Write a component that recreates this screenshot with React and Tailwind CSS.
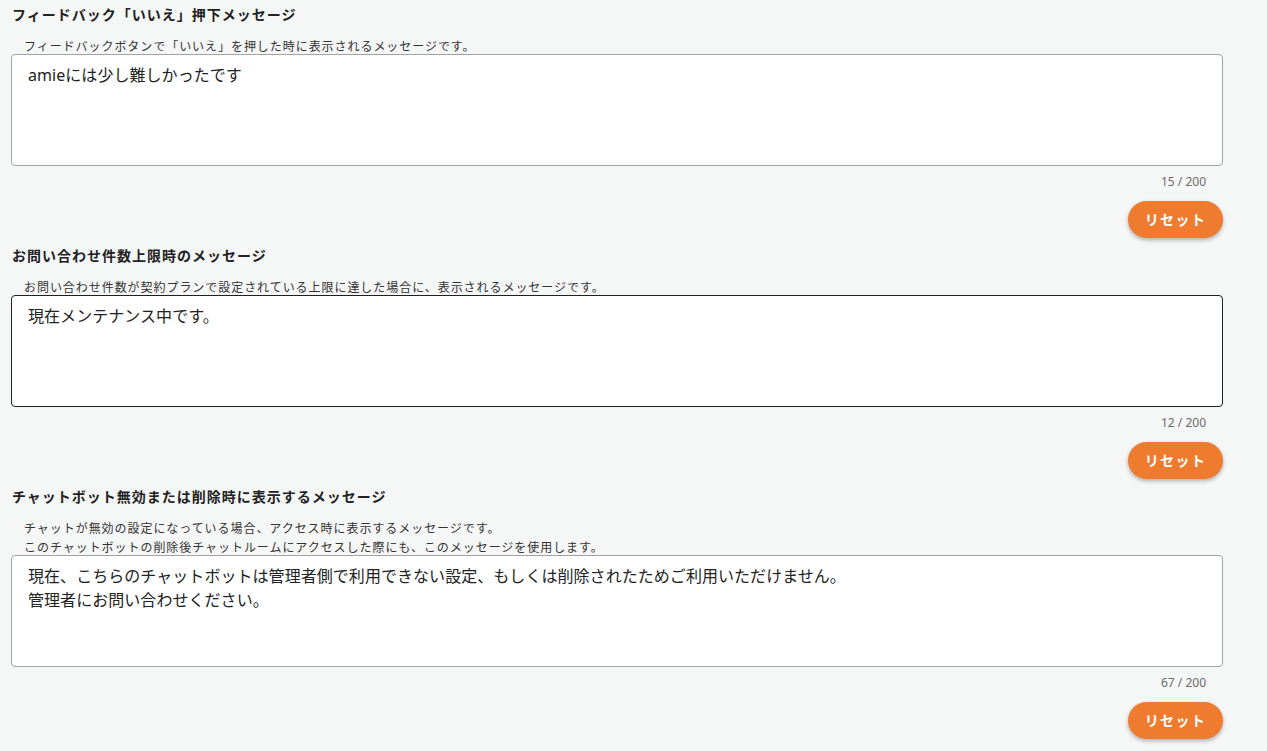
import React from 'react';

const SECTIONS = [
  {
    title: 'フィードバック「いいえ」押下メッセージ',
    desc: ['フィードバックボタンで「いいえ」を押した時に表示されるメッセージです。'],
    value: 'amieには少し難しかったです',
    count: 15,
  },
  {
    title: 'お問い合わせ件数上限時のメッセージ',
    desc: ['お問い合わせ件数が契約プランで設定されている上限に達した場合に、表示されるメッセージです。'],
    value: '現在メンテナンス中です。',
    count: 12,
    focused: true,
  },
  {
    title: 'チャットボット無効または削除時に表示するメッセージ',
    desc: [
      'チャットが無効の設定になっている場合、アクセス時に表示するメッセージです。',
      'このチャットボットの削除後チャットルームにアクセスした際にも、このメッセージを使用します。',
    ],
    value: '現在、こちらのチャットボットは管理者側で利用できない設定、もしくは削除されたためご利用いただけません。\n管理者にお問い合わせください。',
    count: 67,
  },
];

const Section = ({ title, desc, value, count, focused }) => (
  <section className="flex flex-col">
    <h2 className="pl-[1px] text-[14px] leading-[20px] font-bold tracking-[1px] text-[#222]">{title}</h2>
    <div className="mt-[12px] -mb-[2px] pl-[13px] text-[12px] leading-[19px] tracking-[0.95px] text-[#333]">
      {desc.map((d) => (
        <p key={d}>{d}</p>
      ))}
    </div>
    <textarea
      readOnly
      defaultValue={value}
      className={`block w-[1212px] h-[112px] resize-none rounded-[4px] bg-white px-4 py-2 text-[16px] leading-[24px] tracking-[0.05px] text-[#222] outline-none border ${
        focused ? 'border-[#1f1f1f]' : 'border-[#a3a3a3]'
      }`}
    />
    <div className="w-[1212px] mt-[7px] pr-[17px] text-right text-[12px] leading-[18px] text-[#6b6b6b]">
      {count} / 200
    </div>
    <div className="w-[1212px] flex justify-end mt-[10px]">
      <button
        type="button"
        className="w-[95px] h-[37px] rounded-full bg-[#ef7b2f] text-white text-[14px] font-bold tracking-[0.1em] shadow-[0_2px_4px_rgba(0,0,0,0.3)]"
      >
        リセット
      </button>
    </div>
  </section>
);

export default function App() {
  return (
    <div
      className="min-h-screen w-full bg-[#f5f6f6] pl-[11px] pt-[5px] flex flex-col gap-[8px]"
      style={{ fontFamily: '"Noto Sans", "Noto Sans CJK JP", sans-serif' }}
    >
      {SECTIONS.map((s) => (
        <Section key={s.title} {...s} />
      ))}
    </div>
  );
}
